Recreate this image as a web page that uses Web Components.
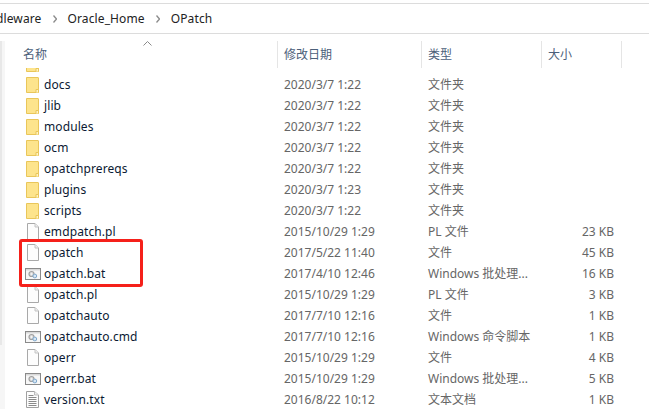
<!DOCTYPE html>
<html><head><meta charset="utf-8"><style>
html,body{margin:0;padding:0;background:#fff;overflow:hidden;height:409px}
body{font-family:"Noto Sans","Noto Sans CJK SC",sans-serif;font-size:12px}
</style></head><body>
<file-explorer></file-explorer>
<template id="folder"><svg width="13" height="16" viewBox="0 0 13 16"><path d="M.5.5h11.5a.5.5 0 0 1 .5.5v14.5H.5z" fill="#fde48c" stroke="#e9c65a"/><path d="M10 15.5v-3h2.5v3" fill="#fff3c4" stroke="#e9c65a"/></svg></template>
<template id="file"><svg width="13" height="17" viewBox="0 0 13 17"><path d="M1.5.5h7.5l3.5 3.5v12.5H1.5z" fill="#fdfdfd" stroke="#a9a9a9"/><path d="M9 .5v3.5h3.5" fill="#eee" stroke="#c4c4c4"/></svg></template>
<template id="text"><svg width="13" height="17" viewBox="0 0 13 17"><path d="M.5.5h8l4 3.5v12.5H.5z" fill="#fdfdfd" stroke="#a0a0a0"/><path d="M8.5.5v3.5h4" fill="#eee" stroke="#bbb"/><path d="M2.5 4.5h5M2.5 6.5h8M2.5 8.5h8M2.5 10.5h8M2.5 12.5h8M2.5 14.5h8" stroke="#8a8a8a" fill="none"/></svg></template>
<template id="bat"><svg width="16" height="12" viewBox="0 0 16 12"><rect x=".5" y=".5" width="15" height="11" fill="#f7f7f7" stroke="#8a8a8a"/><path d="M1 1h14v1.5H1z" fill="#d8d8d8"/><circle cx="6.5" cy="6" r="2.5" fill="#dcdcdc" stroke="#a0a0a0" stroke-width="1.2"/><circle cx="6.5" cy="6" r=".8" fill="#fff"/><circle cx="9.8" cy="8" r="1.9" fill="#d6e6f4" stroke="#7fa8cc"/></svg></template>
<script>
const rows=[
["folder","","","",""],
["folder","docs","2020/3/7 1:22","文件夹",""],
["folder","jlib","2020/3/7 1:22","文件夹",""],
["folder","modules","2020/3/7 1:22","文件夹",""],
["folder","ocm","2020/3/7 1:22","文件夹",""],
["folder","opatchprereqs","2020/3/7 1:22","文件夹",""],
["folder","plugins","2020/3/7 1:23","文件夹",""],
["folder","scripts","2020/3/7 1:22","文件夹",""],
["file","emdpatch.pl","2015/10/29 1:29","PL 文件","23 KB"],
["file","opatch","2017/5/22 11:40","文件","45 KB"],
["bat","opatch.bat","2017/4/10 12:46","Windows 批处理...","16 KB"],
["file","opatch.pl","2015/10/29 1:29","PL 文件","3 KB"],
["file","opatchauto","2017/7/10 12:16","文件","1 KB"],
["bat","opatchauto.cmd","2017/7/10 12:16","Windows 命令脚本","1 KB"],
["file","operr","2015/10/29 1:29","文件","4 KB"],
["bat","operr.bat","2015/10/29 1:29","Windows 批处理...","5 KB"],
["text","version.txt","2016/8/22 10:12","文本文档","1 KB"]];
class FileRow extends HTMLElement{
 constructor(){super();const s=this.attachShadow({mode:"open"});
 s.innerHTML=`<style>:host{display:grid;grid-template-columns:44px 240px 144px 120px 66px;height:21px;line-height:21px;white-space:nowrap;color:#666}
 .i{display:flex;align-items:center;justify-content:center;padding-left:23px;height:21px;box-sizing:border-box;width:42px}
 .n{color:#0b1a33;letter-spacing:.1px}.s{text-align:right}svg{display:block}</style>
 <div class="i"></div><div class="n"><slot name="n"></slot></div><div><slot name="d"></slot></div><div><slot name="t"></slot></div><div class="s"><slot name="z"></slot></div>`;}
 connectedCallback(){const k=this.getAttribute("icon");this.shadowRoot.querySelector(".i").append(document.getElementById(k).content.cloneNode(true));}
}
customElements.define("file-row",FileRow);
class HeadCell extends HTMLElement{
 constructor(){super();this.attachShadow({mode:"open"}).innerHTML=`<style>:host{display:block;box-sizing:border-box;height:27px;line-height:27px;padding-left:6px;border-right:1px solid #e5e5e5;color:#4c607a;white-space:nowrap}</style><slot></slot>`;}
}
customElements.define("head-cell",HeadCell);
class FileExplorer extends HTMLElement{
 constructor(){super();const s=this.attachShadow({mode:"open"});
 s.innerHTML=`<style>
 :host{display:block;position:relative;width:649px;height:409px;overflow:hidden;background:#fff}
 .top{margin-top:3px;height:29px;border-top:1px solid #dcdcdc;border-bottom:1px solid #dcdcdc;display:flex;align-items:center;gap:11px;margin-left:-4px;color:#222;line-height:28px;white-space:nowrap;letter-spacing:.12px}
 .top svg{display:block}
 .head{display:grid;grid-template-columns:270px 144px 120px 80px;margin:7px 0 0 8px;position:relative;z-index:1;background:#fff;height:27px}
 .head head-cell:first-child{padding-left:15px}
 .arrow{position:absolute;left:135px;top:0}
 .list{height:341px;overflow:hidden}
 .scroll{margin-top:-15px}
 .band{position:absolute;left:0;top:41px;width:5px;height:368px;background:#f6f6f6}
 .edge{position:absolute;left:0;top:41px;width:2px;height:304px;background:#e8e8e8}
 .mark{position:absolute;left:19px;top:239px;width:124px;height:47.5px;box-sizing:border-box;border:3px solid #f5201a;border-radius:3px}
 </style>
 <div class="top"><span>dleware</span>${this.chev()}<span>Oracle_Home</span>${this.chev()}<span>OPatch</span></div>
 <div class="head"><head-cell>名称</head-cell><head-cell>修改日期</head-cell><head-cell>类型</head-cell><head-cell>大小</head-cell>
 <svg class="arrow" width="9" height="5" viewBox="0 0 9 5"><path d="M.5 4.5l4-4 4 4" fill="none" stroke="#8a8a8a"/></svg></div>
 <div class="list"><div class="scroll"></div></div><div class="band"></div><div class="edge"></div><div class="mark"></div>`;
 const l=s.querySelector(".scroll");
 for(const r of rows){const e=document.createElement("file-row");e.setAttribute("icon",r[0]);
  ["n","d","t","z"].forEach((k,i)=>{const p=document.createElement("span");p.slot=k;p.textContent=r[i+1];e.append(p)});l.append(e);}
 }
 chev(){return `<svg width="4" height="8" viewBox="0 0 4 8"><path d="M.5.5l3 3.5-3 3.5" fill="none" stroke="#8c8c8c" stroke-width="1.3"/></svg>`}
}
customElements.define("file-explorer",FileExplorer);
</script>
</body></html>
